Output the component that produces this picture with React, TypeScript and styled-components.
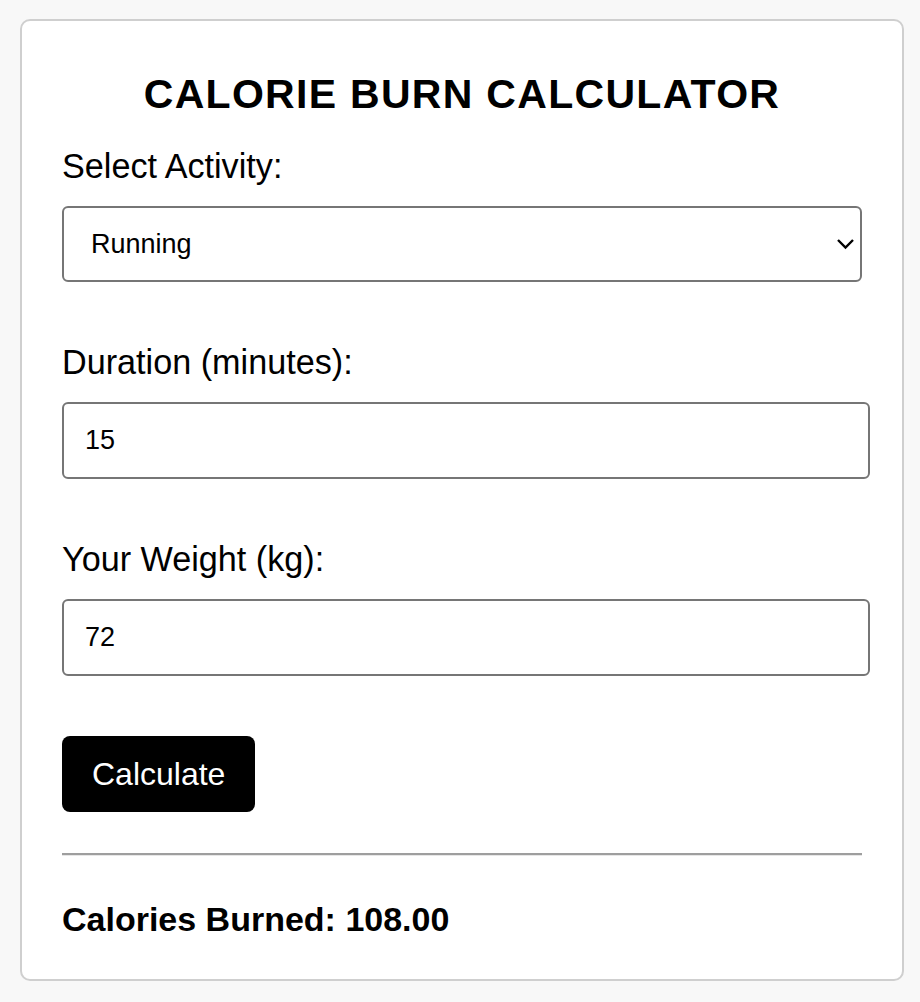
import React, { useState } from "react";
import styled, { createGlobalStyle } from "styled-components";

const GlobalStyle = createGlobalStyle`
	body {
		margin: 0;
		background: #f8f8f8;
		font-family: "Liberation Sans", Arial, Helvetica, sans-serif;
		color: #000;
	}
`;

const Page = styled.div`
	padding: 19px 16px 20px 20px;
`;

const Card = styled.div`
	background: #fff;
	border: 2px solid #cfcfcf;
	border-radius: 10px;
	padding: 40px;
`;

const Title = styled.h1`
	margin: 9px 0 30px;
	font-size: 41px;
	line-height: 48px;
	font-weight: 700;
	letter-spacing: 1.3px;
	text-align: center;
`;

const Field = styled.div`
	display: flex;
	flex-direction: column;
	align-items: flex-start;
	margin-bottom: 62px;
`;

const Label = styled.label`
	font-size: 34.2px;
	line-height: 37px;
	margin-bottom: 21px;
`;

const SelectWrap = styled.div`
	position: relative;
	width: 100%;
`;

const Select = styled.select`
	appearance: none;
	width: 100%;
	height: 76px;
	box-sizing: border-box;
	padding: 0 27px;
	border: 2px solid #767676;
	border-radius: 6px;
	background: #fff;
	color: #000;
	font-family: inherit;
	font-size: 27px;
`;

const Chevron = styled.svg`
	position: absolute;
	right: 7px;
	top: 50%;
	transform: translateY(-50%);
	pointer-events: none;
`;

const Input = styled.input`
	width: calc(100% + 8px);
	height: 77px;
	box-sizing: border-box;
	padding: 0 21px;
	border: 2px solid #767676;
	border-radius: 6px;
	color: #000;
	font-family: inherit;
	font-size: 27px;
`;

const Button = styled.button`
	display: block;
	height: 76px;
	padding: 0 30px;
	margin-top: -2px;
	border: none;
	border-radius: 8px;
	background: #000;
	color: #fff;
	font-family: inherit;
	font-size: 32px;
	cursor: pointer;
`;

const Divider = styled.hr`
	margin: 41px 0 0;
	border: none;
	border-top: 2px solid #9e9e9e;
	border-bottom: 1px solid #e6e6e6;
`;

const Result = styled.p`
	margin: 44px 0 0;
	font-size: 34px;
	line-height: 39px;
	font-weight: 700;
`;

const rates: Record<string, number> = {
	Running: 0.1,
	Cycling: 0.07,
	Swimming: 0.09,
	Walking: 0.04,
};

export default function App() {
	const [activity, setActivity] = useState("Running");
	const [duration, setDuration] = useState("15");
	const [weight, setWeight] = useState("72");
	const [calories, setCalories] = useState(108);

	const calculate = () => {
		setCalories(rates[activity] * Number(duration) * Number(weight));
	};

	return (
		<Page>
			<GlobalStyle />
			<Card>
				<Title>CALORIE BURN CALCULATOR</Title>
				<Field>
					<Label htmlFor="activity">Select Activity:</Label>
					<SelectWrap>
						<Select
							id="activity"
							value={activity}
							onChange={(e) => setActivity(e.target.value)}
						>
							{Object.keys(rates).map((name) => (
								<option key={name}>{name}</option>
							))}
						</Select>
						<Chevron width="19" height="12" viewBox="0 0 19 12">
							<polyline
								points="2,2 9.5,9.5 17,2"
								fill="none"
								stroke="#000"
								strokeWidth="2.4"
							/>
						</Chevron>
					</SelectWrap>
				</Field>
				<Field>
					<Label htmlFor="duration">Duration (minutes):</Label>
					<Input
						id="duration"
						type="text"
						value={duration}
						onChange={(e) => setDuration(e.target.value)}
					/>
				</Field>
				<Field>
					<Label htmlFor="weight">Your Weight (kg):</Label>
					<Input
						id="weight"
						type="text"
						value={weight}
						onChange={(e) => setWeight(e.target.value)}
					/>
				</Field>
				<Button onClick={calculate}>Calculate</Button>
				<Divider />
				<Result>Calories Burned: {calories.toFixed(2)}</Result>
			</Card>
		</Page>
	);
}
